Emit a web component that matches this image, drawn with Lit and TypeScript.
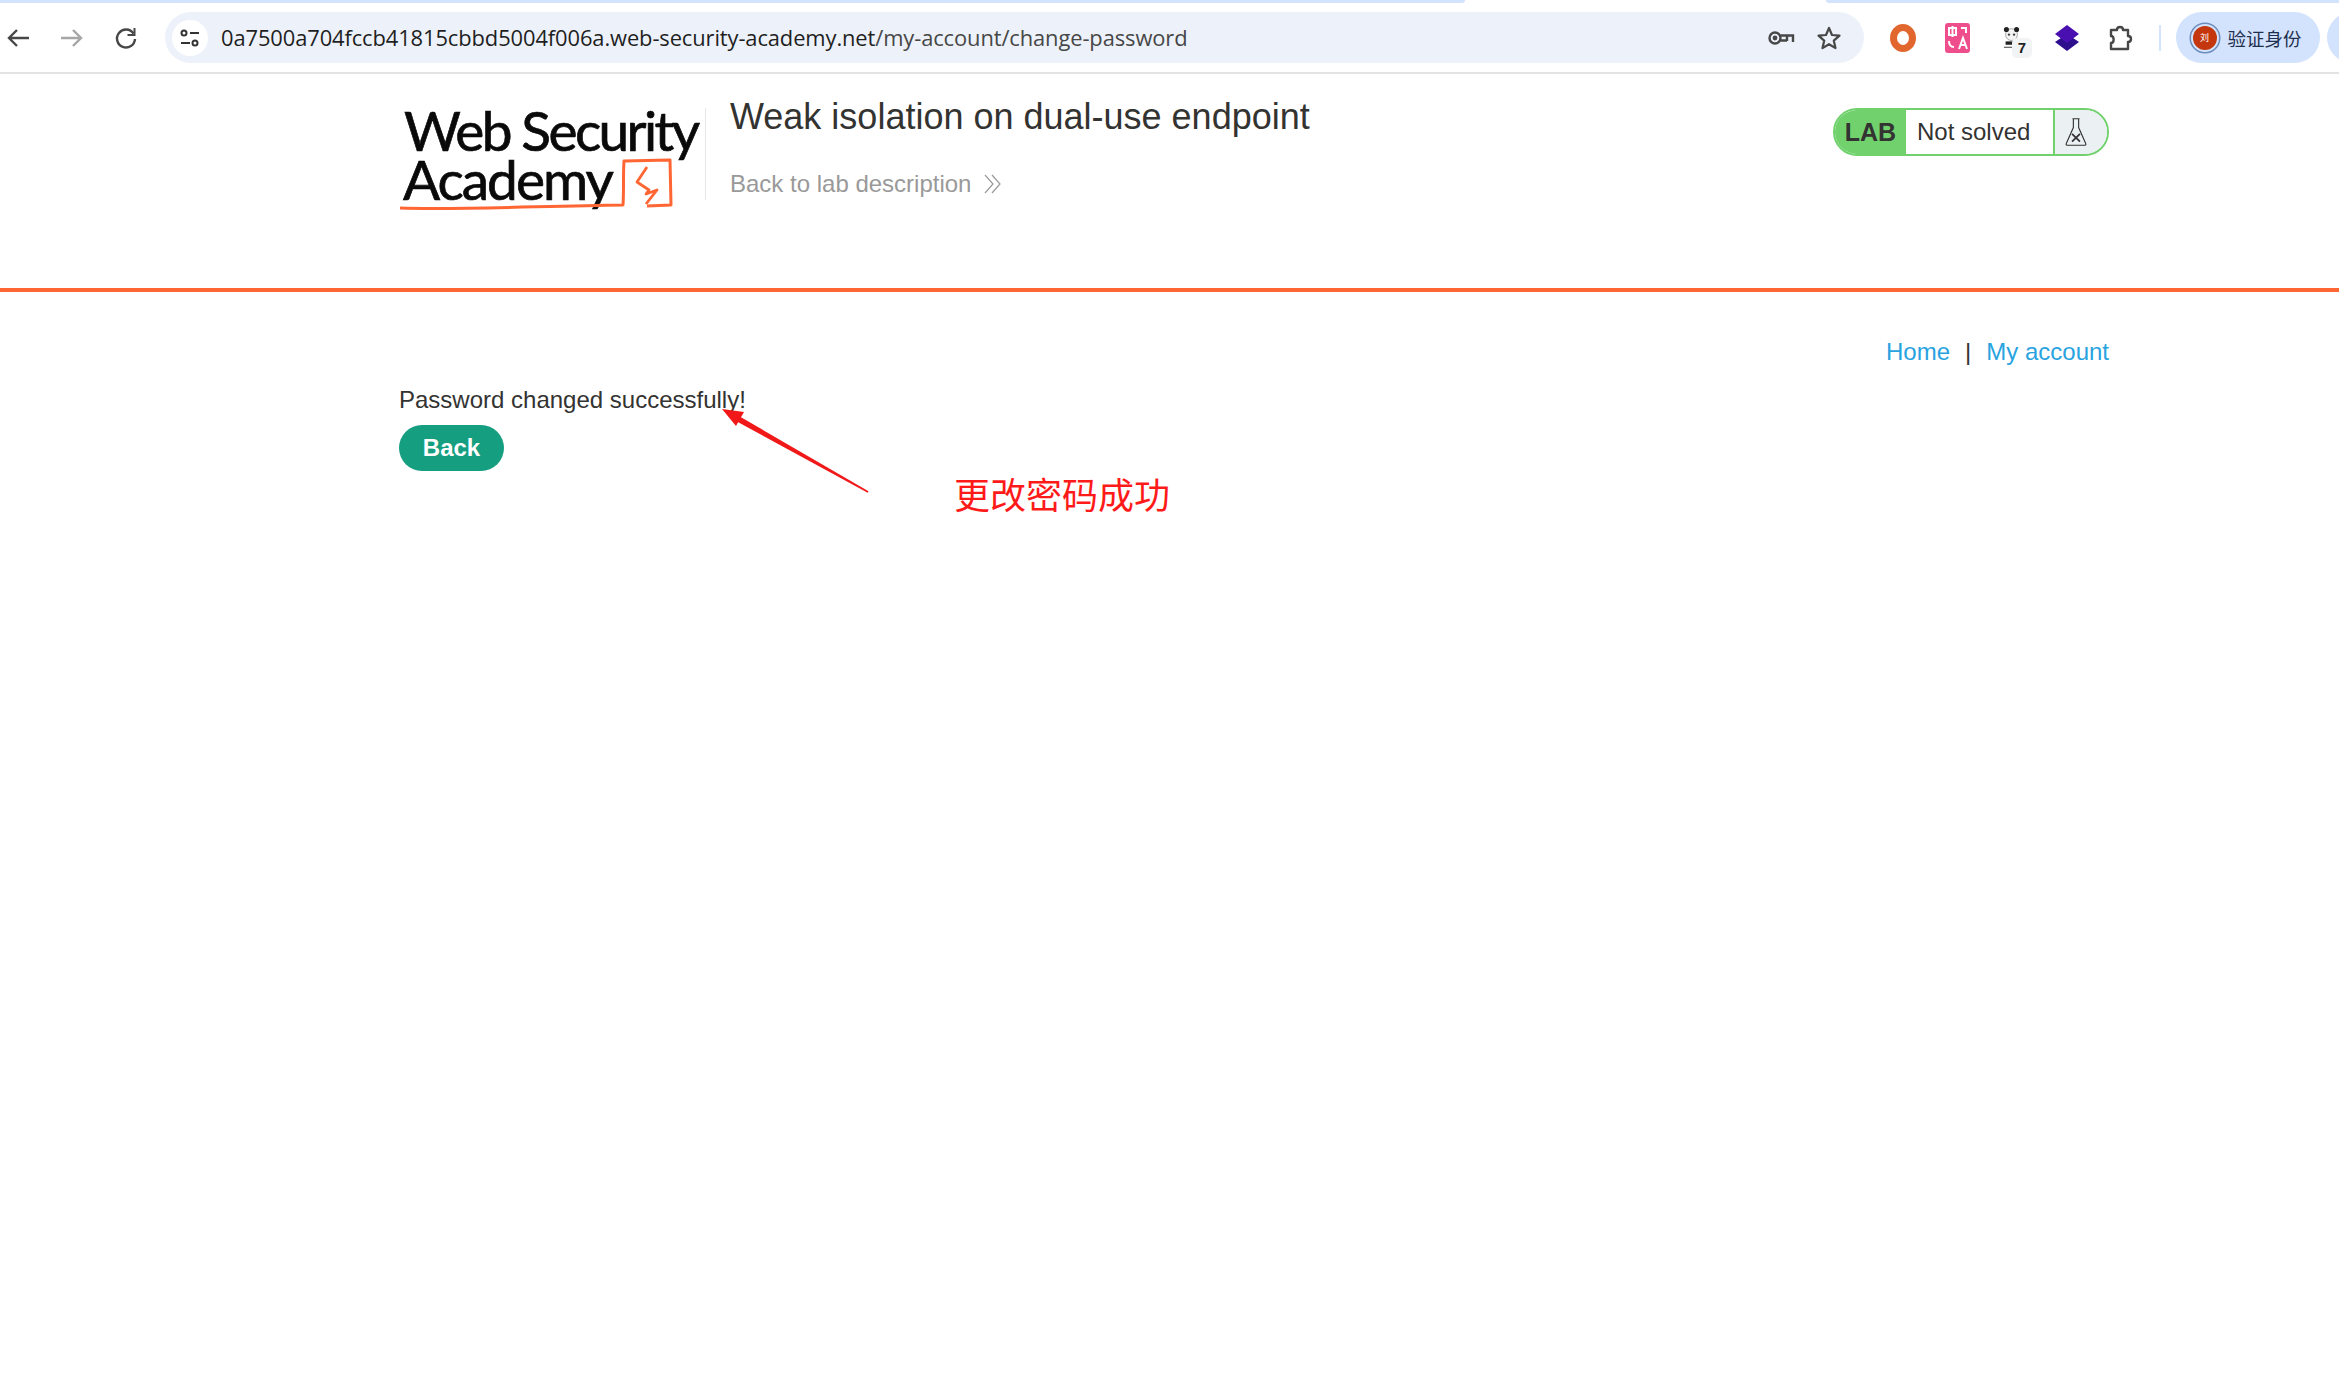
import { LitElement, html, css, svg } from "lit";
import { customElement } from "lit/decorators.js";

@customElement("app-root")
export class AppRoot extends LitElement {
  static styles = css`
    :host { display: block; position: relative; height: 1386px; background: #fff; overflow: hidden; font-family: "Liberation Sans", Arial, sans-serif; color: #333332; }
    .strip { display: flex; height: 3px; justify-content: space-between; }
    .strip i { display: block; background: #d3e3fd; }
    .strip .a { width: 1465px; border-radius: 0 0 6px 0; }
    .strip .b { width: 513px; border-radius: 0 0 0 6px; }
    .toolbar { display: flex; align-items: center; height: 69px; border-bottom: 2px solid #e3e3e3; }
    .nav { display: flex; align-items: center; width: 165px; flex: none; padding-left: 3px; gap: 24px; box-sizing: border-box; }
    .nav svg { width: 30px; height: 30px; flex: none; }
    .bar { flex: none; width: 1699px; height: 51px; border-radius: 26px; background: #edf2fa; display: flex; align-items: center; box-sizing: border-box; padding: 0 7px; }
    .tune { width: 36px; height: 36px; border-radius: 50%; background: #fff; display: flex; align-items: center; justify-content: center; flex: none; }
    .url { margin-left: 13px; font: 21.9px "Open Sans", sans-serif; color: #1f1f1f; white-space: nowrap; flex: 1; letter-spacing: -0.1px; }
    .url span { color: #474747; }
    .baricons { display: flex; gap: 21px; align-items: center; padding-right: 15px; }
    .exts { display: flex; align-items: center; margin-left: 12px; flex: none; }
    .ext { width: 54.5px; height: 40px; display: flex; align-items: center; justify-content: center; position: relative; flex: none; }
    .ext svg { display: block; }
    .panda { position: absolute; left: 18px; top: 9px; }
    .count { position: absolute; left: 27px; top: 20px; width: 20px; height: 20px; background: #f1f3f4; border-radius: 5px; font: bold 15px/20px "Liberation Sans", sans-serif; color: #1f1f1f; text-align: center; }
    .sep { width: 2px; height: 26px; background: #d3e3fd; margin: 0 15px 0 10px; flex: none; }
    .chip { flex: none; width: 144px; height: 51px; border-radius: 26px; background: #d3e3fd; display: flex; align-items: center; box-sizing: border-box; padding-left: 17px; gap: 11px; font: 18.5px "Noto Sans CJK SC", sans-serif; color: #1f2f4f; }
    .avatar { width: 24px; height: 24px; border-radius: 50%; background: #c4370e; color: #fff; font-size: 9px; display: flex; align-items: center; justify-content: center; flex: none; box-shadow: 0 0 0 2px #d3e3fd, 0 0 0 3.5px #6d8bbb; }
    .chip2 { flex: none; width: 40px; height: 51px; margin-left: 7px; border-radius: 26px 0 0 26px; background: #d3e3fd; }

    header { height: 218px; box-sizing: border-box; border-bottom: 4px solid #ff6633; padding: 0 230px 0 400px; display: flex; align-items: flex-start; }
    .logo { width: 305px; height: 116px; margin-top: 31px; flex: none; }
    .logo svg { display: block; overflow: visible; }
    .logo text { font-family: "Lato", sans-serif; fill: #0a0a0a; stroke: #0a0a0a; stroke-width: 0.7px; }
    .title { padding-left: 24px; border-left: 1px solid #e6e6e6; margin-top: 34px; height: 92px; flex: 1; display: flex; flex-direction: column; }
    h2 { margin: -11px 0 0; font-weight: 400; font-size: 36px; line-height: 40px; color: #333332; white-space: nowrap; }
    .back { margin-top: 30px; font-size: 24px; color: #999; display: flex; align-items: center; gap: 12px; line-height: 34px; }
    .badge { margin-top: 34px; width: 276px; height: 48px; flex: none; border-radius: 24px; border: 2px solid #70d16d; box-sizing: border-box; display: flex; align-items: stretch; overflow: hidden; background: #fff; }
    .lab { width: 71px; background: #70d16d; font-weight: 700; font-size: 25px; display: flex; align-items: center; justify-content: center; flex: none; }
    .ns { flex: 1; font-size: 24px; display: flex; align-items: center; padding-left: 11px; }
    .flask { width: 54px; flex: none; border-left: 2px solid #70d16d; background: #ebf0f2; display: flex; align-items: center; justify-content: center; box-sizing: border-box; padding-right: 10px; }

    main { padding: 0 230px 0 399px; font-size: 24px; line-height: 36px; }
    .links { display: flex; justify-content: flex-end; align-items: center; margin-top: 42px; height: 36px; }
    .links a { color: #29a3e0; text-decoration: none; }
    .links b { font-weight: 400; margin: 0 15px; color: #333332; }
    p { margin: 12px 0 0; line-height: 36px; color: #333332; }
    .btn { display: inline-flex; align-items: center; justify-content: center; margin-top: 7px; width: 105px; height: 46px; border-radius: 23px; background: #159e80; color: #fff; font-weight: 700; font-size: 24px; }

    .arrow { position: absolute; left: 700px; top: 395px; }
    .note { position: absolute; left: 954px; top: 467px; font: 36px/52px "Noto Sans CJK SC", sans-serif; color: #ff1a1a; white-space: nowrap; }
  `;

  render() {
    return html`
      <div class="strip"><i class="a"></i><i class="b"></i></div>
      <div class="toolbar">
        <div class="nav">
          <svg viewBox="0 0 30 30" fill="none" stroke="#474747" stroke-width="2.4"><path d="M26 15H6M14 7l-8 8 8 8"/></svg>
          <svg viewBox="0 0 30 30" fill="none" stroke="#a6a6a6" stroke-width="2.4"><path d="M4 15h20M16 7l8 8-8 8"/></svg>
          <svg viewBox="0 0 30 30" fill="none" stroke="#474747" stroke-width="2.4"><path d="M22.5 10.5A9 9 0 1 0 24 16"/><path d="M23.5 5v7h-7" stroke-width="2"/></svg>
        </div>
        <div class="bar">
          <div class="tune">
            <svg width="22" height="22" viewBox="0 0 22 22" fill="none" stroke="#333" stroke-width="2"><circle cx="5" cy="6" r="2.5"/><path d="M11 6h9M2 16h9"/><circle cx="16" cy="16" r="2.5"/></svg>
          </div>
          <div class="url">0a7500a704fccb41815cbbd5004f006a.web-security-academy.net<span>/my-account/change-password</span></div>
          <div class="baricons">
            <svg width="28" height="20" viewBox="0 0 28 20" fill="none" stroke="#474747" stroke-width="2.4"><circle cx="8" cy="10" r="5.5"/><circle cx="8" cy="10" r="1.2"/><path d="M13.5 7.5H26v6.5M20 8v5M13.5 12.5H20"/></svg>
            <svg width="26" height="26" viewBox="0 0 26 26" fill="none" stroke="#474747" stroke-width="2.2" stroke-linejoin="round"><path d="M13 3l3 7 7.5.7-5.7 5 1.7 7.4L13 19.2l-6.5 3.9 1.7-7.4-5.7-5L10 10z"/></svg>
          </div>
        </div>
        <div class="exts">
          <div class="ext"><svg width="26" height="30" viewBox="0 0 26 30"><ellipse cx="13" cy="15" rx="9.5" ry="10.5" fill="none" stroke="#e2672f" stroke-width="7"/></svg></div>
          <div class="ext"><svg width="26" height="30" viewBox="0 0 26 30"><rect width="25" height="30" rx="3" fill="#ee4e8b"/><path d="M4 5h7v7H4zM7.5 3v11M4 18c0 4 1 6 5 6M16 5h5v5" fill="none" stroke="#fff" stroke-width="2"/><path d="M14 26l4-11 4 11M15.5 22h5" fill="none" stroke="#fff" stroke-width="2"/></svg></div>
          <div class="ext">
            <svg class="panda" width="17" height="22" viewBox="0 0 20 26"><circle cx="10" cy="9" r="7" fill="#f4f4f4" stroke="#999" stroke-width="1"/><circle cx="4" cy="3" r="3" fill="#222"/><circle cx="16" cy="3" r="3" fill="#222"/><circle cx="7" cy="9" r="1.4" fill="#444"/><circle cx="13" cy="9" r="1.4" fill="#444"/><path d="M3 17h14v4H3z" fill="#222"/><path d="M1 24h18" stroke="#666" stroke-width="1.5"/></svg>
            <span class="count">7</span>
          </div>
          <div class="ext"><svg width="26" height="26" viewBox="0 0 26 26"><path d="M13 9L25 17 13 26 1 17z" fill="#2d0e8c"/><path d="M13 0L25 9 13 18 1 9z" fill="#4a0fb0"/></svg></div>
          <div class="ext"><svg width="26" height="26" viewBox="0 0 26 26" fill="none" stroke="#474747" stroke-width="2.4" stroke-linejoin="round"><path d="M3 5h6c0-4 6-4 6 0h5v6c4 0 4 6 0 6v7H3v-6c3.5 0 3.5-7 0-7z"/></svg></div>
        </div>
        <div class="sep"></div>
        <div class="chip"><span class="avatar">刘</span><span>验证身份</span></div>
        <div class="chip2"></div>
      </div>

      <header>
        <div class="logo">
          <svg width="305" height="116" viewBox="0 0 305 116">
            <text x="4" y="46" font-size="55" letter-spacing="-2.6">Web Security</text>
            <text x="3" y="95" font-size="55" letter-spacing="-2">Academy</text>
            <path d="M0 103c60 2 140-2 223-3 1-16 0-29 1-44l46-1 1 45-24 1" fill="none" stroke="#ff6633" stroke-width="3" stroke-linejoin="round"/>
            <path d="M247 62l-10 15 12 8-3 4 11-4-11 14" fill="none" stroke="#ff6633" stroke-width="2.8" stroke-linejoin="round"/>
          </svg>
        </div>
        <div class="title">
          <h2>Weak isolation on dual-use endpoint</h2>
          <div class="back">Back to lab description
            <svg width="20" height="22" viewBox="0 0 20 22" fill="none" stroke="#999" stroke-width="1.2"><path d="M2 2l8 9-8 9M9 2l8 9-8 9"/></svg>
          </div>
        </div>
        <div class="badge">
          <div class="lab">LAB</div>
          <div class="ns">Not solved</div>
          <div class="flask">
            <svg width="24" height="30" viewBox="0 0 26 34" fill="none" stroke="#333" stroke-width="1.3"><path d="M9 2h8M10 2v10L2 30q-1 2 2 2h18q3 0 2-2L16 12V2"/><path d="M8.5 19l9 9M17.5 19l-9 9" stroke-width="2"/></svg>
          </div>
        </div>
      </header>

      <main>
        <div class="links"><a>Home</a><b>|</b><a>My account</a></div>
        <p>Password changed successfully!</p>
        <div class="btn">Back</div>
      </main>

      <svg class="arrow" width="200" height="120" viewBox="0 0 200 120">
        ${svg`<path d="M168.500 96.300L38 20.500 35 25.500 167.700 97.700z" fill="#f01818"/><path d="M22 14l22 3-8 14z" fill="#f01818"/>`}
      </svg>
      <div class="note">更改密码成功</div>
    `;
  }
}
